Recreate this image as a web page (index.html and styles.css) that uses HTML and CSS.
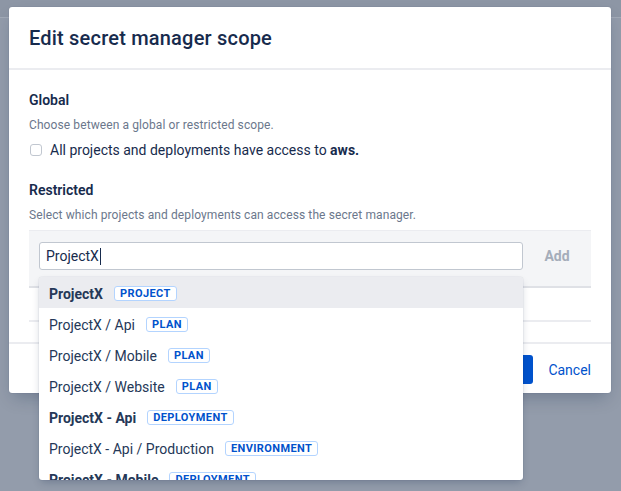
FILE: index.html
```html
<!DOCTYPE html>
<html lang="en">
<head>
<meta charset="utf-8">
<title>Edit secret manager scope</title>
<link rel="stylesheet" href="styles.css">
</head>
<body>
<div class="backdrop-top"></div>
<div class="dialog">
  <header class="dialog-header">
    <h2 class="dialog-title">Edit secret manager scope</h2>
  </header>
  <div class="dialog-body">
    <h3 class="section-title">Global</h3>
    <p class="section-desc">Choose between a global or restricted scope.</p>
    <label class="check-row">
      <span class="checkbox"></span>
      <span>All projects and deployments have access to <strong>aws.</strong></span>
    </label>

    <h3 class="section-title restricted">Restricted</h3>
    <p class="section-desc">Select which projects and deployments can access the secret manager.</p>

    <div class="scope-table">
      <div class="add-row">
        <div class="input-cell">
          <div class="text-input">ProjectX<span class="caret"></span></div>
          <ul class="dropdown">
            <li class="option active"><b>ProjectX</b><span class="lozenge">Project</span></li>
            <li class="option">ProjectX / Api<span class="lozenge">Plan</span></li>
            <li class="option">ProjectX / Mobile<span class="lozenge">Plan</span></li>
            <li class="option">ProjectX / Website<span class="lozenge">Plan</span></li>
            <li class="option"><b>ProjectX - Api</b><span class="lozenge">Deployment</span></li>
            <li class="option">ProjectX - Api / Production<span class="lozenge">Environment</span></li>
            <li class="option"><b>ProjectX - Mobile</b><span class="lozenge">Deployment</span></li>
          </ul>
        </div>
        <div class="add-cell">Add</div>
      </div>
      <div class="empty-row"></div>
    </div>
  </div>
  <footer class="dialog-footer">
    <button class="btn-primary">Save</button>
    <a class="btn-link" href="#">Cancel</a>
  </footer>
</div>
</body>
</html>
```

FILE: styles.css
```css
* { box-sizing: border-box; }

html, body {
  margin: 0;
  height: 100%;
}

body {
  background: #939cab;
  font-family: "Roboto", "Inter", "Liberation Sans", sans-serif;
  color: #172b4d;
  padding: 7px 10px 0 9px;
  position: relative;
  overflow: hidden;
}

.backdrop-top {
  position: absolute;
  left: 0;
  top: 0;
  right: 0;
  height: 18px;
  background: #8d96a5;
  border-bottom: 1px solid #a2aab7;
}

.dialog {
  position: relative;
  width: 602px;
  background: #fff;
  border-radius: 3px;
  box-shadow: 0 0 1px rgba(9, 30, 66, 0.31), 0 8px 16px -4px rgba(9, 30, 66, 0.25);
}

.dialog-header {
  padding: 19px 20px 18px;
  border-bottom: 2px solid #ebecf0;
}

.dialog-title {
  margin: 0;
  font-size: 20px;
  line-height: 24px;
  font-weight: 500;
  letter-spacing: 0.2px;
}

.dialog-body {
  padding: 20px 20px 20px;
}

.section-title {
  margin: 0;
  font-size: 14px;
  line-height: 20px;
  font-weight: 600;
}

.section-title.restricted {
  margin-top: 20px;
}

.section-desc {
  margin: 7px 0 0;
  font-size: 12px;
  line-height: 16px;
  color: #6b778c;
  letter-spacing: 0.1px;
}

.check-row {
  display: flex;
  align-items: center;
  gap: 8px;
  margin-top: 7px;
  font-size: 14px;
  line-height: 20px;
  padding-left: 1px;
}

.check-row strong { font-weight: 700; }

.checkbox {
  width: 12px;
  height: 12px;
  border: 1px solid #c1c7d0;
  border-radius: 3px;
  background: #fff;
}

.scope-table {
  margin-top: 7px;
}

.add-row {
  display: flex;
  background: #f4f5f7;
  border-top: 1px solid #ebecf0;
  border-bottom: 2px solid #dfe1e6;
  padding: 11px 0 16px 10px;
}

.input-cell {
  position: relative;
  width: 484px;
}

.text-input {
  height: 28px;
  border: 1px solid #c1c7d0;
  border-radius: 3px;
  background: #fff;
  padding: 0 6px;
  font-size: 14px;
  line-height: 26px;
  display: flex;
  align-items: center;
}

.caret {
  display: inline-block;
  width: 1px;
  height: 17px;
  background: #172b4d;
  margin-left: 1px;
}

.add-cell {
  flex: 1;
  text-align: center;
  font-size: 14px;
  font-weight: 700;
  color: #a5adba;
  line-height: 28px;
}

.empty-row {
  height: 34px;
  border-bottom: 2px solid #ebecf0;
}

.dropdown {
  position: absolute;
  top: 35px;
  left: 0;
  width: 484px;
  height: 203px;
  margin: 0;
  padding: 0;
  list-style: none;
  background: #fff;
  border-radius: 3px;
  overflow: hidden;
  box-shadow: 0 0 1px rgba(9, 30, 66, 0.31), 0 4px 8px -2px rgba(9, 30, 66, 0.25);
  z-index: 2;
}

.option {
  height: 31px;
  display: flex;
  align-items: center;
  padding: 2px 10px 0;
  font-size: 14px;
  color: #253858;
}

.option b { font-weight: 700; }

.option.active {
  background: #ebecf0;
}

.lozenge {
  margin-left: 11px;
  border: 1px solid #b3d4ff;
  border-radius: 3px;
  padding: 0 5px;
  height: 15px;
  line-height: 13px;
  font-size: 11px;
  font-weight: 700;
  letter-spacing: 0.4px;
  text-transform: uppercase;
  color: #0052cc;
  background: #fff;
}

.dialog-footer {
  border-top: 2px solid #ebecf0;
  padding: 11px 20px 9px;
  display: flex;
  justify-content: flex-end;
  align-items: center;
  gap: 15px;
}

.btn-primary {
  height: 29px;
  padding: 0 12px;
  border: 0;
  border-radius: 3px;
  background: #0052cc;
  color: #fff;
  font-family: inherit;
  font-size: 14px;
  font-weight: 500;
}

.btn-link {
  color: #0052cc;
  text-decoration: none;
  font-size: 14px;
  line-height: 20px;
}
```
